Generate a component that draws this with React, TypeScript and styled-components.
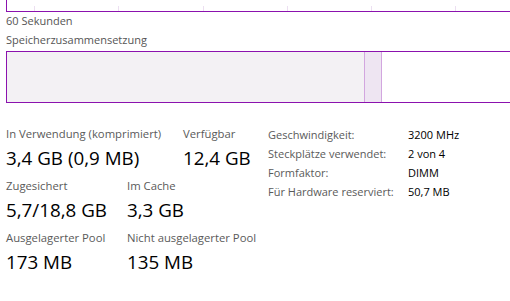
import React from "react";
import styled, { createGlobalStyle } from "styled-components";

const Global = createGlobalStyle`
  html, body { margin: 0; padding: 0; background: #fff; overflow: hidden; }
  body { font-family: "Open Sans", "Noto Sans", sans-serif; color: #000; }
`;

const Page = styled.div`
  width: 510px;
  height: 301px;
  padding-left: 6px;
  box-sizing: border-box;
  overflow: hidden;
`;

const ChartTail = styled.div`
  height: 11px;
  width: 520px;
  border-left: 1px solid #8b12ae;
  border-bottom: 1px solid #8b12ae;
  overflow: hidden;
`;

const Caption = styled.div<{ $mt: number }>`
  font-size: 11px;
  line-height: 14px;
  color: #555;
  margin-top: ${(p) => p.$mt}px;
`;

const CompositionBar = styled.div`
  margin-top: 4px;
  height: 50px;
  width: 520px;
  border: 1px solid #8b12ae;
  border-right: none;
  display: flex;
`;

const Segment = styled.div<{ $w: number; $bg: string; $divider?: boolean }>`
  width: ${(p) => p.$w}px;
  background: ${(p) => p.$bg};
  border-right: ${(p) => (p.$divider ? "1px solid #d2a6df" : "none")};
  flex: none;
`;

const Stats = styled.div`
  display: flex;
  margin-top: 23px;
`;

const LeftStats = styled.div`
  display: flex;
  flex-direction: column;
  gap: 7px;
  width: 262px;
`;

const StatRow = styled.div`
  display: flex;
`;

const Stat = styled.div<{ $w: number }>`
  width: ${(p) => p.$w}px;
  display: flex;
  flex-direction: column;
`;

const StatLabel = styled.div`
  font-size: 11.3px;
  line-height: 15px;
  color: #5a5a5a;
  white-space: nowrap;
`;

const StatValue = styled.div`
  font-size: 18.8px;
  line-height: 26px;
  margin-top: 4px;
  color: #000;
  white-space: nowrap;
`;

const Props = styled.div`
  display: grid;
  grid-template-columns: 140px auto;
  row-gap: 4px;
  padding-top: 1px;
  align-content: start;
`;

const PropLabel = styled.div`
  font-size: 11px;
  line-height: 15px;
  color: #5a5a5a;
  white-space: nowrap;
`;

const PropValue = styled.div`
  font-size: 11px;
  line-height: 15px;
  color: #000;
  white-space: nowrap;
`;

const grid = [27, 111, 196, 280, 364, 448];

export default function App() {
  return (
    <Page>
      <Global />
      <ChartTail>
        <svg width="520" height="11">
          {grid.map((x) => (
            <line key={x} x1={x + 0.5} x2={x + 0.5} y1={0} y2={11} stroke="#ecdff1" strokeWidth={1} />
          ))}
        </svg>
      </ChartTail>
      <Caption $mt={2}>60 Sekunden</Caption>
      <Caption $mt={5}>Speicherzusammensetzung</Caption>
      <CompositionBar>
        <Segment $w={357} $bg="#f3f1f4" $divider />
        <Segment $w={16} $bg="#eee5f2" $divider />
        <Segment $w={140} $bg="#fff" />
      </CompositionBar>
      <Stats>
        <LeftStats>
          <StatRow>
            <Stat $w={177}>
              <StatLabel>In Verwendung (komprimiert)</StatLabel>
              <StatValue>3,4 GB (0,9 MB)</StatValue>
            </Stat>
            <Stat $w={80}>
              <StatLabel>Verfügbar</StatLabel>
              <StatValue>12,4 GB</StatValue>
            </Stat>
          </StatRow>
          <StatRow>
            <Stat $w={121}>
              <StatLabel>Zugesichert</StatLabel>
              <StatValue>5,7/18,8 GB</StatValue>
            </Stat>
            <Stat $w={120}>
              <StatLabel>Im Cache</StatLabel>
              <StatValue>3,3 GB</StatValue>
            </Stat>
          </StatRow>
          <StatRow>
            <Stat $w={121}>
              <StatLabel>Ausgelagerter Pool</StatLabel>
              <StatValue>173 MB</StatValue>
            </Stat>
            <Stat $w={140}>
              <StatLabel>Nicht ausgelagerter Pool</StatLabel>
              <StatValue>135 MB</StatValue>
            </Stat>
          </StatRow>
        </LeftStats>
        <Props>
          <PropLabel>Geschwindigkeit:</PropLabel>
          <PropValue>3200 MHz</PropValue>
          <PropLabel>Steckplätze verwendet:</PropLabel>
          <PropValue>2 von 4</PropValue>
          <PropLabel>Formfaktor:</PropLabel>
          <PropValue>DIMM</PropValue>
          <PropLabel>Für Hardware reserviert:</PropLabel>
          <PropValue>50,7 MB</PropValue>
        </Props>
      </Stats>
    </Page>
  );
}
